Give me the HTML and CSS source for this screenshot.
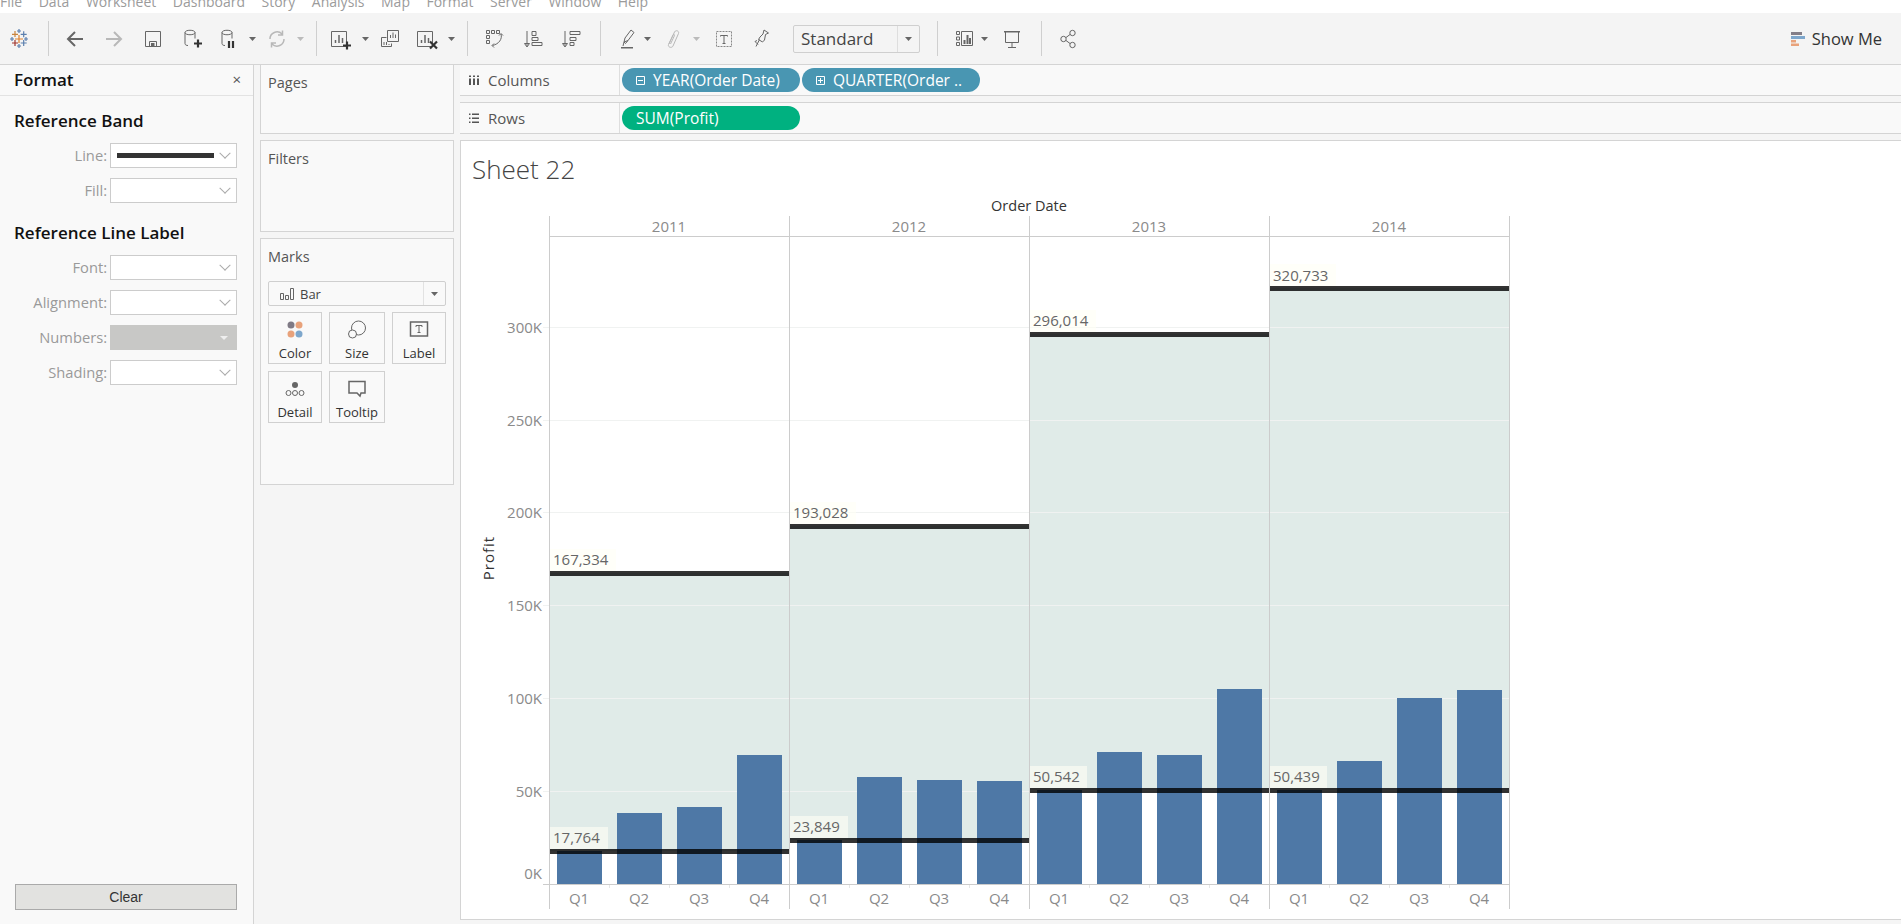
FILE: index.html
```html
<!DOCTYPE html>
<html lang="en">
<head>
<meta charset="utf-8">
<title>Sheet 22</title>
<link rel="stylesheet" href="styles.css">
</head>
<body>
<nav class="menu"><span>File</span><span>Data</span><span>Worksheet</span><span>Dashboard</span><span>Story</span><span>Analysis</span><span>Map</span><span>Format</span><span>Server</span><span>Window</span><span>Help</span></nav>

<header class="toolbar">
  <svg class="ic" viewBox="0 0 24 24"><g class="lg"><path class="lo" stroke-width="1.6" d="M12 8v8M8 12h8"/><path class="lo2" d="M8 4v6M5 7.300h6"/><path class="lb" d="M16.700 4.300v6M13.700 7.300h6"/><path class="lr" d="M8 13v6M5 16h6"/><path class="lb" d="M16.700 13v6M13.700 16h6"/><path class="lb" d="M12 2v4M10 4h4M12 17v4M10 19h4M5 10v4M3 12h4M19 10v4M17 12h4"/></g></svg>
  <i class="sep"></i>
  <svg class="ic" viewBox="0 0 24 24"><path class="s2" d="M20 12H5M12 5l-7 7 7 7"/></svg>
  <svg class="ic" viewBox="0 0 24 24"><path class="s2 off" d="M4 12h15M12 5l7 7-7 7"/></svg>
  <svg class="ic" viewBox="0 0 24 24"><path class="s1" d="M4.500 4.500h15v15h-15zM8.500 19.500v-5h7v5"/><rect class="fg" x="10" y="16" width="3.500" height="3.500"/></svg>
  <svg class="ic" viewBox="0 0 24 24"><path class="s1" d="M6 5.500c0-3 10-3 10 0s-10 3-10 0v11c0 1.500 1.500 2 3 2M16 5.500v6"/><path class="s2 dk" d="M19 12.500v8M15 16.500h8"/></svg>
  <svg class="ic" viewBox="0 0 24 24"><path class="s1" d="M6 5.500c0-3 10-3 10 0s-10 3-10 0v11c0 1.500 1.500 2 3 2M16 5.500v6"/><path class="s2 dk" d="M13 14v7M17 14v7"/></svg>
  <svg class="dd" viewBox="0 0 8 8"><path d="M0 2h7L3.500 6z"/></svg>
  <svg class="ic" viewBox="0 0 24 24"><path class="s1 off w2" d="M5 12a7 7 0 0 1 12-5M19 12a7 7 0 0 1-12 5M17.500 3.500V8H13M6.500 20.500V16H11"/></svg>
  <svg class="dd off-f" viewBox="0 0 8 8"><path d="M0 2h7L3.500 6z"/></svg>
  <i class="sep"></i>
  <svg class="ic" viewBox="0 0 24 24"><path class="s1" d="M3.500 4.500h15v15h-15z"/><path class="s2 thin" d="M7.500 16v-3M11 16V8M14.500 16v-5"/><path class="s2 dk" d="M19 14.500v8M15 18.500h8"/></svg>
  <svg class="dd" viewBox="0 0 8 8"><path d="M0 2h7L3.500 6z"/></svg>
  <svg class="ic" viewBox="0 0 24 24"><path class="s1" d="M2.500 10.500h5M2.500 10.500v9h10v-3M8.500 3.500h11v11h-11z"/><path class="s1" d="M11.500 11V8M14 11V5.500M16.500 11V7.500M5 18v-3M7.500 18v-3M10 18v-1"/></svg>
  <svg class="ic" viewBox="0 0 24 24"><path class="s1" d="M2.500 4.500h15v15h-15z"/><path class="s2 thin" d="M6.500 16v-3M10 16V8M13.500 16v-5"/><path class="s2 dk" d="M15 14.500l7 7M22 14.500l-7 7"/></svg>
  <svg class="dd" viewBox="0 0 8 8"><path d="M0 2h7L3.500 6z"/></svg>
  <i class="sep"></i>
  <svg class="ic" viewBox="0 0 24 24"><path class="s1" d="M5.500 3.500h3v3h-3zM10.500 3.500h3v3h-3zM15.500 3.500h3v3h-3zM5.500 8.500h3v3h-3zM5.500 13.500h3v3h-3z"/><path class="s1" d="M20 7c1.500 5-2 10-8.500 11.500M18 8.500L20 6.500l2 2M13 16.500l-2 2 2 2"/></svg>
  <svg class="ic" viewBox="0 0 24 24"><path class="s1" d="M6 4v15M3.500 16.500L6 20l2.500-3.500z"/><path class="s1" d="M11.500 5.500h4v4h-4zM11.500 11.500h6v3h-6zM11.500 16.500h10v3h-10z" transform="translate(-.5 -1)"/></svg>
  <svg class="ic" viewBox="0 0 24 24"><path class="s1" d="M5 4v15M2.500 16.500L5 20l2.500-3.500z"/><path class="s1" d="M10 4.500h10v3H10zM10 10.500h6v3h-6zM10 15.500h4v3h-4z"/></svg>
  <i class="sep"></i>
  <svg class="ic" viewBox="0 0 24 24"><path class="s1" d="M9 15l1-4 6-8 3 2.500-6 8zM9 15l1.500 1.500L13 13.500M8 19l1-4"/><path class="bar" d="M6 20h12v1.500H6z"/></svg>
  <svg class="dd" viewBox="0 0 8 8"><path d="M0 2h7L3.500 6z"/></svg>
  <svg class="ic" viewBox="0 0 24 24"><path class="s1 off" d="M8 17L13.500 5c1.200-2.500 5-1 4 1.500L12 19c-1.300 2.700-5.500 1-4.500-1.500L12 8c.5-1 2-.5 1.500.5L9.500 17"/></svg>
  <svg class="dd off-f" viewBox="0 0 8 8"><path d="M0 2h7L3.500 6z"/></svg>
  <svg class="ic" viewBox="0 0 24 24"><path class="s1 dash" d="M4.500 4.500h15v15h-15z"/><path class="s1" d="M8.500 9.500v-1h7v1M12 8.500v8M10.500 16.500h3"/></svg>
  <svg class="ic" viewBox="0 0 24 24"><path class="s1" d="M15 3l4.500 3-3 1.500-1 5.500-2 2-4-2.500 1.500-2.500 3-3zM10.500 12.500L7 19.500M8 13.500l-2 1 3 3"/></svg>
  <div class="std"><span>Standard</span><b><svg class="dd" viewBox="0 0 8 8"><path d="M0 2h7L3.500 6z"/></svg></b></div>
  <i class="sep"></i>
  <svg class="ic" viewBox="0 0 24 24"><path class="s1" d="M4.500 4.500h3v3h-3zM4.500 10h3v3h-3zM4.500 15.500h3v3h-3zM9.500 4.500h11v14h-11z"/><path class="s2" d="M12.500 17v-4M15.500 17V8M18 17v-6"/></svg>
  <svg class="dd" viewBox="0 0 8 8"><path d="M0 2h7L3.500 6z"/></svg>
  <svg class="ic" viewBox="0 0 24 24"><path class="bar" d="M4 4h16v1.500H4z"/><path class="s1" d="M5.500 5v10.500h13V5M12 15.500v5M8 20.500h8"/></svg>
  <i class="sep"></i>
  <svg class="ic" viewBox="0 0 24 24"><circle class="s1" cx="16.500" cy="6" r="2.700"/><circle class="s1" cx="7.500" cy="12" r="2.700"/><circle class="s1" cx="16.500" cy="18" r="2.700"/><path class="s1" d="M10 10.500l4-3M10 13.500l4 3"/></svg>
  <div class="showme"><svg class="ic-sm" viewBox="0 0 14 14"><path class="sm1" d="M0 0h11v3H0z"/><path class="sm2" d="M0 4h14v3H0z"/><path class="sm3" d="M0 8h5v2.500H0zM0 11.500h8V14H0z"/></svg><span>Show Me</span></div>
</header>

<main class="workspace">
  <aside class="format">
    <div class="fmt-head"><strong>Format</strong><span class="close">×</span></div>
    <h2 class="fmt-title first">Reference Band</h2>
    <div class="fmt-row"><label>Line:</label><div class="sel"><i class="swatch"></i></div></div>
    <div class="fmt-row"><label>Fill:</label><div class="sel"></div></div>
    <h2 class="fmt-title">Reference Line Label</h2>
    <div class="fmt-row"><label>Font:</label><div class="sel"></div></div>
    <div class="fmt-row"><label>Alignment:</label><div class="sel"></div></div>
    <div class="fmt-row"><label>Numbers:</label><div class="sel dis"></div></div>
    <div class="fmt-row"><label>Shading:</label><div class="sel"></div></div>
    <button class="clear">Clear</button>
  </aside>

  <section class="cards">
    <div class="card pages">Pages</div>
    <div class="card filters">Filters</div>
    <div class="card marks">
      <div class="marks-title">Marks</div>
      <div class="marktype">
        <svg class="bar-ic" viewBox="0 0 14 12"><path class="s1" d="M.5 5.500h3v6h-3zM5.500 7.500h3v4h-3zM10.500 .5h3v11h-3z"/></svg>
        <span>Bar</span>
        <b><svg class="dd" viewBox="0 0 8 8"><path d="M0 2h7L3.500 6z"/></svg></b>
      </div>
      <div class="mark-grid">
        <div class="mk"><svg viewBox="0 0 20 20"><circle class="c1" cx="6" cy="5" r="3.500"/><circle class="c2" cx="14" cy="5" r="3.500"/><circle class="c2" cx="6" cy="14" r="3.500"/><circle class="c3" cx="14" cy="14" r="3.500"/></svg><span>Color</span></div>
        <div class="mk"><svg viewBox="0 0 20 20"><circle class="s1" cx="11.500" cy="8" r="7"/><circle class="s1 wf" cx="5.500" cy="14" r="4"/></svg><span>Size</span></div>
        <div class="mk"><svg viewBox="0 0 20 20"><rect class="s15" x="1.500" y="2" width="17" height="14"/><path class="s1" d="M7 7V5.500h6V7M10 5.500v7M8.500 12.500h3"/></svg><span>Label</span></div>
        <div class="mk"><svg viewBox="0 0 20 20"><circle class="c1d" cx="10" cy="6" r="3"/><circle class="s1" cx="3.500" cy="14" r="2.500"/><circle class="s1" cx="10" cy="14" r="2.500"/><circle class="s1" cx="16.500" cy="14" r="2.500"/></svg><span>Detail</span></div>
        <div class="mk"><svg viewBox="0 0 20 20"><path class="s15" d="M2 2.500h16v11.500h-4l-1 3-3-3H2z"/></svg><span>Tooltip</span></div>
      </div>
    </div>
  </section>

  <section class="stage">
    <div class="shelf">
      <div class="shelf-label"><svg class="sh-ic" viewBox="0 0 12 12"><path d="M1 1.500h2V3H1zM5 1.500h2V3H5zM9 1.500h2V3H9zM1 4.500h2V11H1zM5 4.500h2V11H5zM9 4.500h2V11H9z"/></svg><span>Columns</span></div>
      <div class="pills">
        <div class="pill blue"><svg class="pm" viewBox="0 0 9 9"><path d="M.5 .5h8v8h-8zM2 4.500h5"/></svg><span>YEAR(Order Date)</span></div>
        <div class="pill blue"><svg class="pm" viewBox="0 0 9 9"><path d="M.5 .5h8v8h-8zM2 4.500h5M4.500 2v5"/></svg><span>QUARTER(Order ..</span></div>
      </div>
    </div>
    <div class="shelf rows">
      <div class="shelf-label"><svg class="sh-ic" viewBox="0 0 12 12"><path d="M1 1.500h1.500V3H1zM4 1.500h7V3H4zM1 5.500h1.500V7H1zM4 5.500h7V7H4zM1 9.500h1.500V11H1zM4 9.500h7V11H4z"/></svg><span>Rows</span></div>
      <div class="pills">
        <div class="pill green"><span>SUM(Profit)</span></div>
      </div>
    </div>
    <div class="view">
      <h1 class="sheet">Sheet 22</h1>
      <svg class="chart" viewBox="461 190 1440 729" width="1440" height="729">
        <text class="t-head" x="1029" y="211">Order Date</text>
        <g class="t-year">
          <text x="669" y="232">2011</text><text x="909" y="232">2012</text><text x="1149" y="232">2013</text><text x="1389" y="232">2014</text>
        </g>

        <g class="band">
          <rect x="550" y="573" width="239" height="278"/>
          <rect x="790" y="526" width="239" height="314"/>
          <rect x="1030" y="334" width="239" height="456"/>
          <rect x="1270" y="288" width="239" height="502"/>
        </g>

        <g class="grid">
          <rect x="543" y="327" width="966" height="1"/>
          <rect x="543" y="420" width="966" height="1"/>
          <rect x="543" y="512" width="966" height="1"/>
          <rect x="543" y="605" width="966" height="1"/>
          <rect x="543" y="698" width="966" height="1"/>
          <rect x="543" y="791" width="966" height="1"/>
        </g>

        <g class="bars">
          <rect x="557" y="851" width="45" height="33"/>
          <rect x="617" y="813" width="45" height="71"/>
          <rect x="677" y="807" width="45" height="77"/>
          <rect x="737" y="755" width="45" height="129"/>
          <rect x="797" y="840" width="45" height="44"/>
          <rect x="857" y="777" width="45" height="107"/>
          <rect x="917" y="780" width="45" height="104"/>
          <rect x="977" y="781" width="45" height="103"/>
          <rect x="1037" y="790" width="45" height="94"/>
          <rect x="1097" y="752" width="45" height="132"/>
          <rect x="1157" y="755" width="45" height="129"/>
          <rect x="1217" y="689" width="45" height="195"/>
          <rect x="1277" y="790" width="45" height="94"/>
          <rect x="1337" y="761" width="45" height="123"/>
          <rect x="1397" y="698" width="45" height="186"/>
          <rect x="1457" y="690" width="45" height="194"/>
        </g>

        <g class="rules">
          <rect x="550" y="571" width="239" height="5"/>
          <rect x="790" y="524" width="239" height="5"/>
          <rect x="1030" y="332" width="239" height="5"/>
          <rect x="1270" y="286" width="239" height="5"/>
          <rect x="550" y="849" width="239" height="5"/>
          <rect x="790" y="838" width="239" height="5"/>
          <rect x="1030" y="788" width="239" height="5"/>
          <rect x="1270" y="788" width="239" height="5"/>
        </g>

        <g class="tag">
          <rect x="550" y="549" width="66" height="22"/>
          <rect x="790" y="502" width="66" height="22"/>
          <rect x="1030" y="310" width="66" height="22"/>
          <rect x="1270" y="264" width="66" height="22"/>
          <rect x="550" y="827" width="58" height="22"/>
          <rect x="790" y="816" width="58" height="22"/>
          <rect x="1030" y="766" width="57" height="22"/>
          <rect x="1270" y="766" width="57" height="22"/>
        </g>
        <g class="t-tag">
          <text x="553" y="565">167,334</text>
          <text x="793" y="518">193,028</text>
          <text x="1033" y="326">296,014</text>
          <text x="1273" y="281">320,733</text>
          <text x="553" y="843">17,764</text>
          <text x="793" y="832">23,849</text>
          <text x="1033" y="782">50,542</text>
          <text x="1273" y="782">50,439</text>
        </g>

        <g class="frame">
          <rect x="549" y="216" width="1" height="693"/>
          <rect x="789" y="216" width="1" height="693"/>
          <rect x="1029" y="216" width="1" height="693"/>
          <rect x="1269" y="216" width="1" height="693"/>
          <rect x="1509" y="216" width="1" height="693"/>
          <rect x="549" y="236" width="961" height="1"/>
          <rect x="543" y="884" width="967" height="1"/>
        </g>
        <g class="qtick">
          <rect x="609" y="885" width="1" height="3"/><rect x="669" y="885" width="1" height="3"/><rect x="729" y="885" width="1" height="3"/>
          <rect x="849" y="885" width="1" height="3"/><rect x="909" y="885" width="1" height="3"/><rect x="969" y="885" width="1" height="3"/>
          <rect x="1089" y="885" width="1" height="3"/><rect x="1149" y="885" width="1" height="3"/><rect x="1209" y="885" width="1" height="3"/>
          <rect x="1329" y="885" width="1" height="3"/><rect x="1389" y="885" width="1" height="3"/><rect x="1449" y="885" width="1" height="3"/>
        </g>

        <g class="t-y">
          <text x="542" y="333">300K</text><text x="542" y="426">250K</text><text x="542" y="518">200K</text><text x="542" y="611">150K</text><text x="542" y="704">100K</text><text x="542" y="797">50K</text><text x="542" y="879">0K</text>
        </g>
        <text class="t-axis" transform="translate(494 558) rotate(-90)">Profit</text>
        <g class="t-q">
          <text x="579" y="904">Q1</text><text x="639" y="904">Q2</text><text x="699" y="904">Q3</text><text x="759" y="904">Q4</text>
          <text x="819" y="904">Q1</text><text x="879" y="904">Q2</text><text x="939" y="904">Q3</text><text x="999" y="904">Q4</text>
          <text x="1059" y="904">Q1</text><text x="1119" y="904">Q2</text><text x="1179" y="904">Q3</text><text x="1239" y="904">Q4</text>
          <text x="1299" y="904">Q1</text><text x="1359" y="904">Q2</text><text x="1419" y="904">Q3</text><text x="1479" y="904">Q4</text>
        </g>
      </svg>
    </div>
  </section>
</main>
</body>
</html>
```
FILE: styles.css
```css
* { box-sizing: border-box; }
html, body { margin: 0; height: 924px; overflow: hidden; }
body { background: #f5f5f5; font-family: "Open Sans", "Noto Sans", sans-serif; color: #333; }

.menu { height: 13px; background: #fff; overflow: hidden; display: flex; gap: 16.500px; font-size: 14px; line-height: 20px; color: #9b9b9b; white-space: nowrap; }
.menu span { margin-top: -8px; }

.toolbar {
  height: 52px; background: #f4f4f4; border-bottom: 1px solid #d4d4d4; padding-left: 7px;
  display: grid; align-items: center;
  grid-template-columns: 41px 15px 39px 39px 38px 37px 33px 16px 32px 19px 12px 34px 17px 36px 33px 19px 14px 40px 39px 40px 15px 29px 17px 32px 19px 37px 44px 144px 15px 29px 19px 41px 15px 1fr auto;
}
.ic { width: 24px; height: 24px; display: block; }
.dd { width: 8px; height: 8px; display: block; fill: #666; }
.off-f { fill: #bbb; }
.sep { display: block; width: 1px; height: 35px; background: #cfcfcf; }
.s1, .s2, .s15 { fill: none; stroke: #666; stroke-width: 1; }
.s2 { stroke-width: 2; }
.s15 { stroke-width: 1.5; }
.thin { stroke-width: 1.5; }
.w2 { stroke-width: 1.500; }
.off { stroke: #b8b8b8; }
.dk { stroke: #333; stroke-width: 2.200; }
.fg { fill: #666; }
.bar { fill: #666; }
.dash { stroke-dasharray: 2 1; stroke: #888; }
.lg path { fill: none; stroke-width: 1.200; }
.lo { stroke: #e0812c; }
.lo2 { stroke: #c9833c; }
.lb { stroke: #5b7fae; }
.lr { stroke: #a1372f; }

.std { width: 127px; height: 28px; border: 1px solid #cfcfcf; border-radius: 2px; display: flex; align-items: center; font-size: 17px; color: #444; }
.std span { flex: 1; padding-left: 7px; }
.std b { width: 22px; height: 100%; border-left: 1px solid #dedede; display: flex; align-items: center; justify-content: center; }

.showme { display: flex; align-items: center; gap: 7px; padding-right: 19px; font-size: 16.500px; color: #333; }
.ic-sm { width: 14px; height: 14px; }
.sm1 { fill: #847f88; }
.sm2 { fill: #7ea7cc; }
.sm3 { fill: #e8a27b; }

.workspace { height: 859px; display: grid; grid-template-columns: 254px 194px 1441px; column-gap: 6px; }

.format { background: #f9f9f9; border-right: 1px solid #d4d4d4; display: flex; flex-direction: column; }
.fmt-head { height: 31px; padding: 0 12px 2px 14px; border-bottom: 1px solid #e3e3e3; display: flex; align-items: center; justify-content: space-between; font-size: 17px; color: #111; }
.fmt-head strong { font-weight: 600; }
.close { font-size: 15px; color: #555; }
.fmt-title { margin: 8px 0 10px; padding-left: 14px; height: 24px; line-height: 24px; font-size: 17px; font-weight: 600; color: #111; }
.fmt-title.first { margin-top: 13px; }
.fmt-row { display: flex; height: 25px; margin-bottom: 10px; align-items: center; }
.fmt-row label { width: 107px; padding-bottom: 2px; text-align: right; font-size: 14.700px; color: #9a9a9a; }
.sel { margin-left: 3px; width: 127px; height: 25px; background: #fff; border: 1px solid #ccc; display: flex; align-items: center; padding-left: 6px; padding-right: 7px; }
.sel::after { content: ""; margin-left: auto; width: 7px; height: 7px; border-right: 1px solid #aaa; border-bottom: 1px solid #aaa; transform: rotate(45deg) translate(-2px, -2px); }
.swatch { display: block; width: 97px; height: 5px; background: #333; }
.sel.dis { background: #c8c8c6; border-color: #c8c8c6; }
.sel.dis::after { width: 0; height: 0; border: 4px solid transparent; border-top-color: #eee; border-bottom: 0; transform: none; margin-right: 1px; }
.clear { margin: auto 0 14px 15px; width: 222px; height: 26px; background: #e2e2e0; border: 1px solid #aaa; font: 14px "Liberation Sans", sans-serif; color: #333; padding: 0; }

.cards { display: flex; flex-direction: column; gap: 6px; }
.card { background: #f9f9f9; border: 1px solid #d4d4d4; padding: 8px 7px 0; font-size: 14.500px; color: #555; line-height: 20px; }
.pages { height: 69px; border-top: 0; }
.filters { height: 92px; }
.marks { height: 247px; padding-top: 8px; }
.marks-title { height: 34px; }
.marktype { height: 25px; border: 1px solid #cfcfcf; border-radius: 2px; width: 178px; display: flex; align-items: center; padding-left: 11px; font-size: 13px; color: #444; }
.bar-ic { width: 14px; height: 12px; margin-right: 6px; }
.marktype span { flex: 1; }
.marktype b { width: 22px; height: 100%; border-left: 1px solid #e2e2e2; display: flex; align-items: center; justify-content: center; }
.mark-grid { margin-top: 6px; display: grid; grid-template-columns: 54px 56px 54px; gap: 7px; }
.mk { height: 52px; border: 1px solid #d0d0d0; display: flex; flex-direction: column; align-items: center; padding-top: 7px; font-size: 13px; line-height: 18px; color: #333; }
.mk svg { width: 20px; height: 20px; margin-bottom: 4px; }
.c1 { fill: #7f7a85; }
.c2 { fill: #e8a27b; }
.c3 { fill: #7ea7cc; }
.c1d { fill: #666; }
.wf { fill: #f9f9f9; }

.stage { display: flex; flex-direction: column; }
.shelf { height: 31px; background: #f9f9f9; border-bottom: 1px solid #d4d4d4; display: flex; }
.shelf.rows { height: 32px; margin-top: 6px; border-top: 1px solid #d4d4d4; }
.shelf-label { width: 160px; flex: none; border-right: 1px solid #dedede; display: flex; align-items: center; padding-left: 8px; gap: 8px; font-size: 15px; color: #555; }
.sh-ic { width: 12px; height: 12px; fill: #555; }
.pills { display: flex; gap: 2px; padding-left: 2px; align-items: center; }
.pill { width: 178px; height: 24px; border-radius: 12px; color: #fff; font-size: 15.500px; display: flex; align-items: center; padding-left: 14px; gap: 8px; }
.blue { background: #4996b2; }
.green { background: #00b180; }
.pm { width: 9px; height: 9px; fill: none; stroke: #fff; stroke-width: 1; }

.view { margin-top: 6px; height: 780px; background: #fff; border: 1px solid #d4d4d4; border-right: 0; }
.sheet { margin: 0; height: 49px; padding: 12px 0 0 11px; font-size: 26px; line-height: 32px; font-weight: 300; color: #444; }
.chart { display: block; }

.chart text { font-family: "Open Sans", "Noto Sans", sans-serif; }
.t-head { font-size: 14.500px; font-weight: 500; fill: #333; text-anchor: middle; }
.t-year text, .t-q text { font-size: 15px; fill: #8a8a8a; text-anchor: middle; }
.t-y text { font-size: 15px; fill: #8a8a8a; text-anchor: end; }
.t-tag text { font-size: 15px; fill: #666; }
.t-axis { font-size: 15px; font-weight: 500; letter-spacing: 1px; fill: #333; text-anchor: middle; }
.band rect { fill: #e0ebe8; }
.grid rect { fill: #f0f2f1; }
.bars rect { fill: #4e78a6; }
.rules rect { fill: #000; fill-opacity: .8; }
.tag rect { fill: #fffff5; fill-opacity: .6; }
.frame rect { fill: #cccccc; }
.qtick rect { fill: #e6e6e6; }
```
